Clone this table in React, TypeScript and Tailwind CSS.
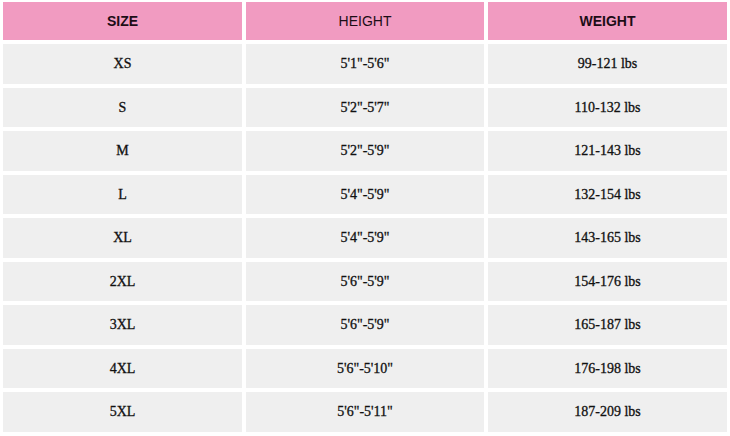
const rows = [
  { size: "XS", height: "5'1\"-5'6\"", weight: "99-121 lbs" },
  { size: "S", height: "5'2\"-5'7\"", weight: "110-132 lbs" },
  { size: "M", height: "5'2\"-5'9\"", weight: "121-143 lbs" },
  { size: "L", height: "5'4\"-5'9\"", weight: "132-154 lbs" },
  { size: "XL", height: "5'4\"-5'9\"", weight: "143-165 lbs" },
  { size: "2XL", height: "5'6\"-5'9\"", weight: "154-176 lbs" },
  { size: "3XL", height: "5'6\"-5'9\"", weight: "165-187 lbs" },
  { size: "4XL", height: "5'6\"-5'10\"", weight: "176-198 lbs" },
  { size: "5XL", height: "5'6\"-5'11\"", weight: "187-209 lbs" },
]

function HeadCell({ children, bold }: { children: string; bold?: boolean }) {
  return (
    <div
      className={`flex h-[38px] items-center justify-center bg-[#f19bc1] text-[14px] text-[#1c0d16] font-['Liberation_Sans',Arial,sans-serif] ${
        bold ? "font-bold" : "font-normal"
      }`}
    >
      {children}
    </div>
  )
}

function Cell({ children }: { children: string }) {
  return (
    <div className="flex h-[39.5px] items-center justify-center bg-[#efefef] text-[14px] text-[#111111] [-webkit-text-stroke:0.3px_#111111] font-['Liberation_Serif','Times_New_Roman',serif]">
      {children}
    </div>
  )
}

export default function App() {
  return (
    <div className="h-[436px] w-[730px] bg-white px-[3px] pt-[2px]">
      <div className="grid grid-cols-[239px_238px_239px] gap-[4px]">
        <HeadCell bold>SIZE</HeadCell>
        <HeadCell>HEIGHT</HeadCell>
        <HeadCell bold>WEIGHT</HeadCell>
        {rows.map((r) => (
          <>
            <Cell key={r.size + "s"}>{r.size}</Cell>
            <Cell key={r.size + "h"}>{r.height}</Cell>
            <Cell key={r.size + "w"}>{r.weight}</Cell>
          </>
        ))}
      </div>
    </div>
  )
}
